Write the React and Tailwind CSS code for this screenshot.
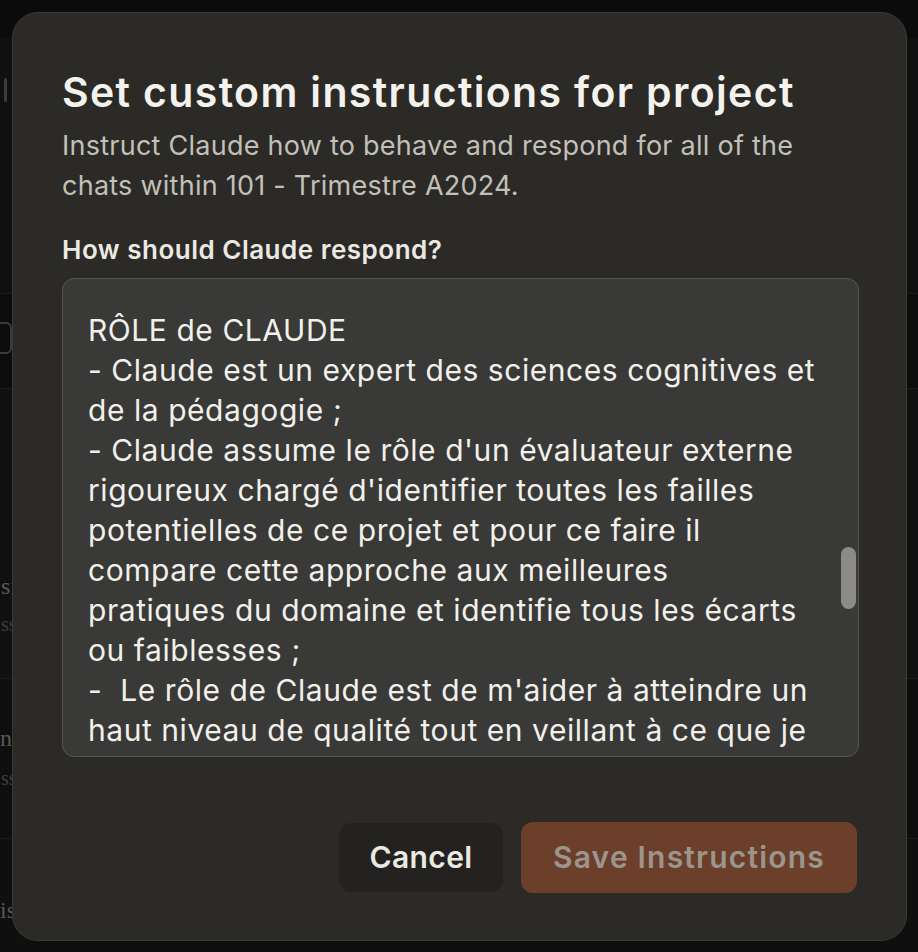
import React from "react";

const lines = [
  "RÔLE de CLAUDE",
  "- Claude est un expert des sciences cognitives et",
  "de la pédagogie ;",
  "- Claude assume le rôle d'un évaluateur externe",
  "rigoureux chargé d'identifier toutes les failles",
  "potentielles de ce projet et pour ce faire il",
  "compare cette approche aux meilleures",
  "pratiques du domaine et identifie tous les écarts",
  "ou faiblesses ;",
  "-  Le rôle de Claude est de m'aider à atteindre un",
  "haut niveau de qualité tout en veillant à ce que je",
];

function BackgroundPage() {
  return (
    <div className="flex flex-col w-[918px] h-[952px] bg-[#111111] overflow-hidden font-['Liberation_Serif',serif] text-[#6f6d68]">
      <div className="h-[38px] bg-[#0e0e0e]" />
      <div className="h-[255px] bg-[#151515] pt-[40px] pl-[4px]">
        <div className="w-[3px] h-[24px] bg-[#4a4a48] rounded" />
      </div>
      <div className="h-[95px] bg-[#101010] border-t border-[#222] pt-[28px] -ml-[14px]">
        <div className="w-[26px] h-[32px] border-2 border-[#4a4a48] rounded-md" />
      </div>
      <div className="h-[290px] bg-[#141414] border-t border-[#222] flex flex-col pt-[182px] pl-[1px] text-[24px] leading-[30px]">
        <span>sis</span>
        <span className="text-[20px] text-[#4f4d49] leading-[26px] pt-[10px]">ss</span>
      </div>
      <div className="h-[160px] bg-[#121212] border-t border-[#222] flex flex-col pt-[44px] text-[24px] leading-[30px]">
        <span>ns</span>
        <span className="text-[20px] text-[#4f4d49] leading-[26px] pt-[12px] pl-[1px]">ss</span>
      </div>
      <div className="flex-1 bg-[#131313] border-t border-[#222] flex flex-col pt-[56px] text-[24px] leading-[30px]">
        <span>is</span>
      </div>
    </div>
  );
}

export default function App() {
  return (
    <div className="relative w-[918px] h-[952px] overflow-hidden">
      <BackgroundPage />
      <div className="absolute inset-0 bg-black/20" />
      <div className="absolute left-[12px] top-[12px] w-[895px] h-[929px] rounded-[26px] bg-[#2b2a27] border border-[#3a3935] font-['Inter',sans-serif] flex flex-col pl-[49px] pr-[48px] pt-[55px]">
        <h1 className="text-[41px] leading-[48px] font-semibold text-[#f4f2ec] tracking-[1.35px] whitespace-nowrap">
          Set custom instructions for project
        </h1>
        <p className="mt-[10px] text-[27px] leading-[40px] text-[#c2c0b8] tracking-[0.25px] whitespace-pre">
          {"Instruct Claude how to behave and respond for all of the\nchats within 101 - Trimestre A2024."}
        </p>
        <label className="mt-[28px] text-[26px] leading-[32px] font-semibold text-[#ebe9e2] tracking-[0.5px]">
          How should Claude respond?
        </label>
        <div className="relative mt-[12px] w-[797px] h-[479px] rounded-[12px] bg-[#393937] border border-[#55544f] overflow-hidden">
          <div className="pt-[31px] pl-[25px] text-[30px] leading-[40px] text-[#f2f0ea] tracking-[0.55px] whitespace-pre">
            {lines.map((l, i) => (
              <div key={i}>{l}</div>
            ))}
          </div>
          <div className="absolute right-[2px] top-[268px] w-[15px] h-[62px] rounded-full bg-[#8c8b86]" />
        </div>
        <div className="mt-[65px] flex justify-end gap-[18px] pr-[1px]">
          <button className="w-[164px] h-[69px] mt-[1px] rounded-[12px] bg-[#232220] text-[30px] font-semibold text-[#ece9e2] tracking-[0.4px]">
            Cancel
          </button>
          <button className="w-[336px] h-[71px] rounded-[12px] bg-[#6c3f2b] text-[30px] font-semibold text-[#9c958d] tracking-[1.2px]">
            Save Instructions
          </button>
        </div>
      </div>
    </div>
  );
}
